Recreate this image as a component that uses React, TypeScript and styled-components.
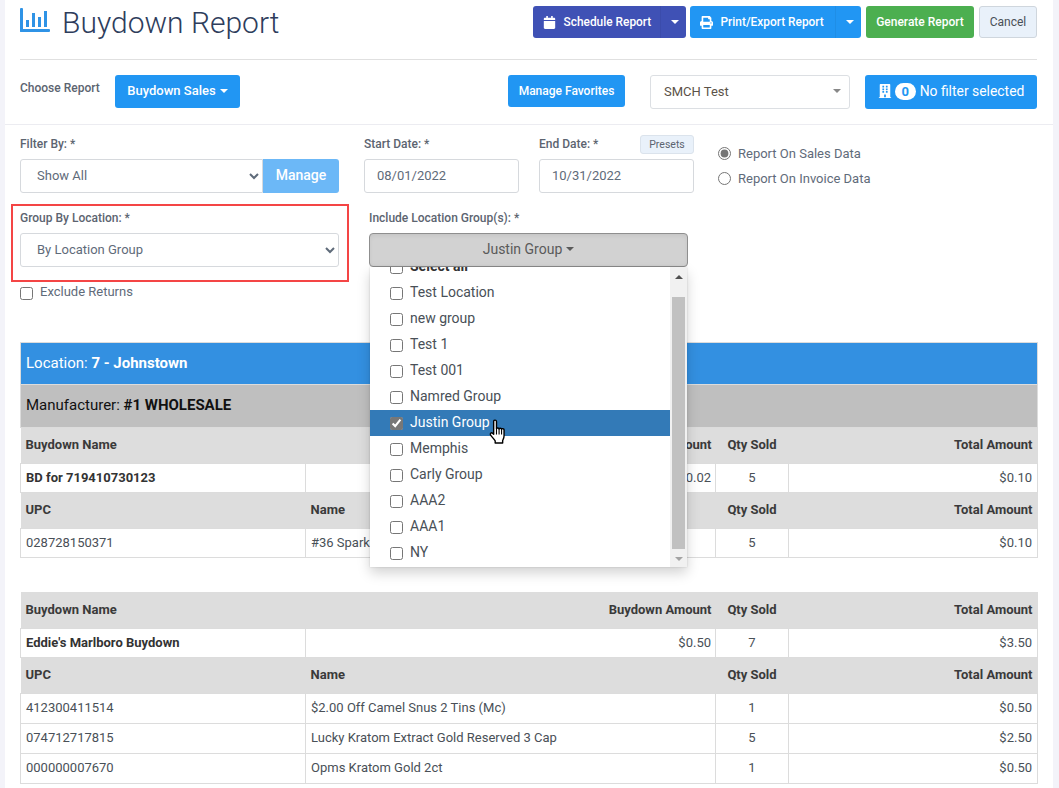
import React from "react";
import styled, { createGlobalStyle } from "styled-components";
import { FaCalendar, FaPrint, FaBuilding } from "react-icons/fa";

const Global = createGlobalStyle`
  html, body { margin: 0; padding: 0; height: 788px; overflow: hidden; background: #f3f3f9; }
  * { box-sizing: border-box; }
  body { font-family: Roboto, "Liberation Sans", sans-serif; color: #495057; }
`;

const Page = styled.div`
  width: 1048px; margin-left: 5px; background: #fff; height: 788px; overflow: hidden;
`;

const Head = styled.div`
  margin: 0 15px 0; width: 1017px; height: 60px; border-bottom: 1px solid #e0e0e0;
  display: flex; justify-content: space-between; padding-top: 6px;
`;

const TitleWrap = styled.div`
  display: flex; align-items: flex-start; gap: 12px; padding-top: 2px;
`;

const Title = styled.h1`
  margin: 0; font-size: 30px; line-height: 30px; font-weight: 300; color: #2e3d5c;
`;

const Actions = styled.div`
  display: flex; gap: 4px; height: 32px;
`;

const SplitBtn = styled.div<{ $bg: string; $w: number }>`
  display: flex; align-items: center; width: ${p => p.$w}px; height: 32px; border-radius: 3px;
  background: ${p => p.$bg}; color: #fff; font-size: 11.9px; font-weight: 500;
`;

const SplitMain = styled.div`
  flex: 1; height: 100%; display: flex; align-items: center; gap: 7.5px; padding-left: 10px;
  border-right: 1px solid rgba(0,0,0,0.05);
  svg { font-size: 13px; }
`;

const SplitCaret = styled.div`
  width: 25px; display: flex; justify-content: center;
`;

const Caret = styled.span<{ $color?: string }>`
  display: inline-block; width: 0; height: 0; margin-left: 3px; vertical-align: 2px;
  border-left: 4px solid transparent; border-right: 4px solid transparent;
  border-top: 4px solid ${p => p.$color || "#fff"};
`;

const SolidBtn = styled.div<{ $bg: string; $w: number; $h?: number; $size?: number; $ml?: number; $lift?: number }>`
  display: flex; align-items: center; justify-content: center; gap: 1px;
  width: ${p => p.$w}px; height: ${p => p.$h || 32}px; border-radius: 3px; margin-left: ${p => p.$ml || 0}px;
  padding-bottom: ${p => p.$lift || 0}px;
  background: ${p => p.$bg}; color: #fff; font-size: ${p => p.$size || 12}px; font-weight: 500;
`;

const CancelBtn = styled.div`
  margin-left: 1px; width: 58px; height: 32px; border-radius: 3px; background: #e9f1fa;
  border: 1px solid #cfd6dd; color: #495057; font-size: 12px;
  display: flex; align-items: center; justify-content: center;
`;

const ChooseBar = styled.div`
  height: 65px; border-bottom: 1px solid #ececf1; padding: 15px 15px 0;
  display: flex; align-items: flex-start;
`;

const ChooseLabel = styled.div`
  width: 95px; font-size: 12px; font-weight: 500; color: #5c6470; padding-top: 6px;
`;

const ChooseSpacer = styled.div`
  width: 268px;
`;

const FakeSelect = styled.div`
  margin-left: 25px; width: 200px; height: 34px; border: 1px solid #dcdfe3; border-radius: 3px;
  display: flex; align-items: center; justify-content: space-between; padding: 0 8px 2px 13px;
  font-size: 13px; color: #5b5248;
`;

const FilterBtn = styled.div`
  margin-left: 15px; width: 172px; height: 34px; border-radius: 3px; background: #2196f3; color: #fff;
  display: flex; align-items: center; justify-content: center; gap: 3px; font-size: 13.9px; padding-bottom: 2px;
  svg { font-size: 14px; }
`;

const Badge = styled.span`
  width: 21px; height: 17px; border-radius: 9px; background: #fff; color: #2196f3;
  font-size: 13px; font-weight: 700; display: flex; align-items: center; justify-content: center;
  margin-right: 1px;
`;

const Form = styled.div`
  height: 217px; padding: 11px 15px 0; display: grid; align-content: start;
  grid-template-columns: 319px 355px 1fr; grid-template-rows: 68px auto auto;
`;

const Label = styled.label`
  display: block; font-size: 12px; font-weight: 500; color: #5c6470; line-height: 16px;
`;

const FieldTop = styled.div`
  padding-top: 0;
`;

const Native = styled.select`
  display: block; width: 100%; height: 34px; padding: 0 8px 2px 12px; font: 400 13px Roboto, sans-serif;
  color: #5f6b7a; background: #fff; border: 1px solid #d6d9dd; border-radius: 3px; margin-top: 7px;
`;

const InputGroup = styled.div`
  display: flex; align-items: flex-end;
  select { border-radius: 3px 0 0 3px; flex: 1; width: auto; min-width: 0; }
`;

const AddOn = styled.div`
  width: 76px; height: 34px; background: #6cb8f7; color: #fff; font-size: 14px; font-weight: 500; padding-bottom: 2px;
  border-radius: 0 3px 3px 0; display: flex; align-items: center; justify-content: center;
`;

const Dates = styled.div`
  display: flex; gap: 20px; margin-left: 25px;
`;

const DateField = styled.div`
  flex: none; width: 155px; position: relative;
`;

const DateInput = styled.div`
  height: 34px; margin-top: 7px; border: 1px solid #d6d9dd; border-radius: 3px; padding: 0 0 2px 12px;
  display: flex; align-items: center; font-size: 13px; color: #5f6b7a;
`;

const Presets = styled.div`
  position: absolute; right: 0; top: -1px; width: 54px; height: 19px; background: #e9f1fa;
  border: 1px solid #dbe3ec; border-radius: 3px; font-size: 10.5px; color: #5c6470;
  display: flex; align-items: center; justify-content: center;
`;

const Radios = styled.div`
  padding: 8px 0 0 24px; display: flex; flex-direction: column; gap: 7px;
`;

const RadioRow = styled.label`
  display: flex; align-items: center; gap: 7px; font-size: 13px; color: #5f6b7a; height: 18px;
  input { margin: 0; width: 13px; height: 13px; accent-color: #757575; }
`;

const GroupBox = styled.div`
  margin-left: -9px; margin-right: -10px; height: 78px; border: 2px solid #f44545;
  padding: 4px 8px 0 7px;
`;

const Exclude = styled.label`
  grid-column: 1; display: flex; align-items: center; gap: 7px; font-size: 13px; color: #5f6b7a;
  margin-top: 2px; height: 16px; padding-bottom: 2px;
  input { margin: 4px 0 0; width: 13px; height: 13px; }
`;

const IncludeField = styled.div`
  position: relative; margin-left: 30px; width: 319px; padding-top: 6px;
`;

const DropBtn = styled.div`
  margin-top: 7px; height: 34px; background: #d2d2d2; border: 1px solid #8f8f8f; border-radius: 4px; padding-bottom: 2px;
  display: flex; align-items: center; justify-content: center; gap: 1px; font-size: 14px; color: #5a5a5a;
  box-shadow: inset 0 2px 4px rgba(0,0,0,0.06);
`;

const Menu = styled.div`
  position: absolute; left: 1px; top: 63px; width: 317px; height: 300px; background: #fff; z-index: 5;
  box-shadow: 0 6px 12px rgba(0,0,0,0.175), 0 0 2px rgba(0,0,0,0.15); overflow: hidden;
`;

const MenuList = styled.div`
  margin-top: -13px; width: 300px;
`;

const MenuRow = styled.label<{ $active?: boolean; $bold?: boolean }>`
  display: flex; align-items: center; gap: 7px; height: 26px; padding: 0 0 2px 20px; font-size: 14px;
  font-weight: ${p => p.$bold ? 700 : 400};
  background: ${p => p.$active ? "#337ab7" : "transparent"};
  color: ${p => p.$active ? "#fff" : p.$bold ? "#333" : "#495057"};
  input { margin: 2px 0 0; width: 13px; height: 13px; accent-color: #777; }
`;

const Scroll = styled.div`
  position: absolute; right: 0; top: 0; bottom: 0; width: 17px; background: #f1f1f1;
`;

const Thumb = styled.div`
  position: absolute; left: 2px; right: 2px; top: 30px; height: 252px; background: #c1c1c1;
`;

const ScrollArrow = styled.span<{ $down?: boolean }>`
  position: absolute; left: 5px; width: 0; height: 0;
  border-left: 4px solid transparent; border-right: 4px solid transparent;
  ${p => p.$down ? "bottom: 6px; border-top: 4px solid #a3a3a3;" : "top: 8px; border-bottom: 4px solid #505050;"}
`;

const HandWrap = styled.div`
  position: absolute; left: 118px; top: 152px; width: 20px; height: 26px; z-index: 6;
`;

const Tables = styled.div`
  margin: 0 15px;
`;

const Report = styled.table<{ $gap?: number; $lift?: boolean }>`
  width: 1017px; border-collapse: collapse; table-layout: fixed; margin-bottom: ${p => p.$gap || 0}px;
  font-size: 13px; color: #495057;
  td:nth-child(2), th:nth-child(2) { padding-right: 4px; }
  ${p => p.$lift ? "td, th { padding-bottom: 2px; }" : ""}
`;

const Band = styled.td<{ $tone: "blue" | "gray" }>`
  height: ${p => p.$tone === "blue" ? 42 : 43}px; padding: 0 5px; font-size: 15px;
  background: ${p => p.$tone === "blue" ? "#3390e1" : "#bfbfbf"};
  color: ${p => p.$tone === "blue" ? "#fff" : "#111"};
  border: 1px solid #dcdcdc;
  b { font-weight: 700; }
`;

const Th = styled.th<{ $align?: string }>`
  height: 36px; padding: 0 5px; background: #dddddd; font-weight: 700; font-size: 13px; color: #3a3a3a;
  text-align: ${p => p.$align || "left"};
`;

const Td = styled.td<{ $align?: string; $bold?: boolean }>`
  height: 29px; padding: 0 5px; border: 1px solid #dcdcdc; background: #fff;
  text-align: ${p => p.$align || "left"}; font-weight: ${p => p.$bold ? 700 : 400};
  color: ${p => p.$bold ? "#333" : "#495057"};
`;

const ColumnRow = styled.tr<{ $lift?: boolean }>`
  ${p => p.$lift ? "th { padding-bottom: 2px; }" : ""}
`;

const ItemRow = styled.tr`
  td { height: 30px; padding-bottom: 2px; }
`;

const ChartIcon = () => (
  <svg width="30" height="24" viewBox="0 0 30 24" fill="#2f93e6">
    <rect x="0" y="0" width="3" height="24" rx="1" />
    <rect x="0" y="21" width="30" height="3" rx="1" />
    <rect x="6" y="12" width="3" height="7" />
    <rect x="12" y="5" width="3" height="14" />
    <rect x="18" y="9" width="3" height="10" />
    <rect x="24" y="3" width="3" height="16" />
  </svg>
);

const HandCursor = () => (
  <svg width="20" height="26" viewBox="0 0 18 24">
    <path
      d="M5 2.2c0-1.6 2.6-1.6 2.6 0V9c0-.9 2.4-1 2.4.2 0-1 2.3-1 2.3.3 0-.9 2.3-.8 2.3.5v5.5c0 2-.7 3-1.3 4.3v2.4H6.4v-2c-1-1.4-2.4-3-4.2-5.3-1-1.3.6-2.9 2-1.6L5 14V2.2z"
      fill="#fff" stroke="#000" strokeWidth="1.3" strokeLinejoin="round"
    />
    <path d="M7.6 9v5.2M10 9.2v5M12.3 9.5v4.7" stroke="#000" strokeWidth="1" fill="none" />
  </svg>
);

const groups = ["Test Location", "new group", "Test 1", "Test 001", "Namred Group", "Justin Group", "Memphis", "Carly Group", "AAA2", "AAA1", "NY"];

const HeadRow = ({ first, second, lift }: { first: string; second?: string; lift?: boolean }) => (
  <ColumnRow $lift={lift}>
    <Th>{first}</Th>
    <Th $align={second === "Name" ? "left" : "right"}>{second}</Th>
    <Th $align="center">Qty Sold</Th>
    <Th $align="right">Total Amount</Th>
  </ColumnRow>
);

const Cols = () => (
  <colgroup>
    <col style={{ width: 285 }} />
    <col style={{ width: 410 }} />
    <col style={{ width: 73 }} />
    <col style={{ width: 249 }} />
  </colgroup>
);

export default function App() {
  return (
    <Page>
      <Global />
      <Head>
        <TitleWrap>
          <ChartIcon />
          <Title>Buydown Report</Title>
        </TitleWrap>
        <Actions>
          <SplitBtn $bg="#3f51b5" $w={153}>
            <SplitMain><FaCalendar />Schedule Report</SplitMain>
            <SplitCaret><Caret /></SplitCaret>
          </SplitBtn>
          <SplitBtn $bg="#2196f3" $w={171}>
            <SplitMain><FaPrint />Print/Export Report</SplitMain>
            <SplitCaret><Caret /></SplitCaret>
          </SplitBtn>
          <SolidBtn $bg="#4caf50" $w={108} $ml={1}>Generate Report</SolidBtn>
          <CancelBtn>Cancel</CancelBtn>
        </Actions>
      </Head>

      <ChooseBar>
        <ChooseLabel>Choose Report</ChooseLabel>
        <SolidBtn $bg="#2196f3" $w={125} $h={33} $size={13} $lift={2}>Buydown Sales <Caret /></SolidBtn>
        <ChooseSpacer />
        <SolidBtn $bg="#2196f3" $w={117} $h={32}>Manage Favorites</SolidBtn>
        <FakeSelect>SMCH Test<Caret $color="#888" /></FakeSelect>
        <FilterBtn><FaBuilding /><Badge>0</Badge>No filter selected</FilterBtn>
      </ChooseBar>

      <Form>
        <FieldTop>
          <Label>Filter By: *</Label>
          <InputGroup>
            <Native defaultValue="all"><option value="all">Show All</option></Native>
            <AddOn>Manage</AddOn>
          </InputGroup>
        </FieldTop>
        <Dates>
          <DateField>
            <Label>Start Date: *</Label>
            <DateInput>08/01/2022</DateInput>
          </DateField>
          <DateField>
            <Label>End Date: *</Label>
            <Presets>Presets</Presets>
            <DateInput>10/31/2022</DateInput>
          </DateField>
        </Dates>
        <Radios>
          <RadioRow><input type="radio" name="src" defaultChecked />Report On Sales Data</RadioRow>
          <RadioRow><input type="radio" name="src" />Report On Invoice Data</RadioRow>
        </Radios>
        <GroupBox>
          <Label>Group By Location: *</Label>
          <Native defaultValue="g"><option value="g">By Location Group</option></Native>
        </GroupBox>
        <IncludeField>
          <Label>Include Location Group(s): *</Label>
          <DropBtn>Justin Group <Caret $color="#5a5a5a" /></DropBtn>
          <Menu>
            <MenuList>
              <MenuRow $bold><input type="checkbox" />Select all</MenuRow>
              {groups.map(g => (
                <MenuRow key={g} $active={g === "Justin Group"}>
                  <input type="checkbox" defaultChecked={g === "Justin Group"} />{g}
                </MenuRow>
              ))}
            </MenuList>
            <Scroll>
              <ScrollArrow />
              <Thumb />
              <ScrollArrow $down />
            </Scroll>
            <HandWrap><HandCursor /></HandWrap>
          </Menu>
        </IncludeField>
        <div />
        <Exclude><input type="checkbox" />Exclude Returns</Exclude>
      </Form>

      <Tables>
        <Report $gap={34} $lift>
          <Cols />
          <tbody>
            <tr><Band $tone="blue" colSpan={4}>Location: <b>7 - Johnstown</b></Band></tr>
            <tr><Band $tone="gray" colSpan={4}>Manufacturer: <b>#1 WHOLESALE</b></Band></tr>
            <HeadRow first="Buydown Name" second="Buydown Amount" />
            <tr><Td $bold>BD for 719410730123</Td><Td $align="right">$0.02</Td><Td $align="center">5</Td><Td $align="right">$0.10</Td></tr>
            <HeadRow first="UPC" second="Name" />
            <tr><Td>028728150371</Td><Td>#36 Spark</Td><Td $align="center">5</Td><Td $align="right">$0.10</Td></tr>
          </tbody>
        </Report>
        <Report>
          <Cols />
          <tbody>
            <HeadRow first="Buydown Name" second="Buydown Amount" />
            <tr><Td $bold>Eddie's Marlboro Buydown</Td><Td $align="right">$0.50</Td><Td $align="center">7</Td><Td $align="right">$3.50</Td></tr>
            <HeadRow first="UPC" second="Name" lift />
            <ItemRow><Td>412300411514</Td><Td>$2.00 Off Camel Snus 2 Tins (Mc)</Td><Td $align="center">1</Td><Td $align="right">$0.50</Td></ItemRow>
            <ItemRow><Td>074712717815</Td><Td>Lucky Kratom Extract Gold Reserved 3 Cap</Td><Td $align="center">5</Td><Td $align="right">$2.50</Td></ItemRow>
            <ItemRow><Td>000000007670</Td><Td>Opms Kratom Gold 2ct</Td><Td $align="center">1</Td><Td $align="right">$0.50</Td></ItemRow>
          </tbody>
        </Report>
      </Tables>
    </Page>
  );
}
